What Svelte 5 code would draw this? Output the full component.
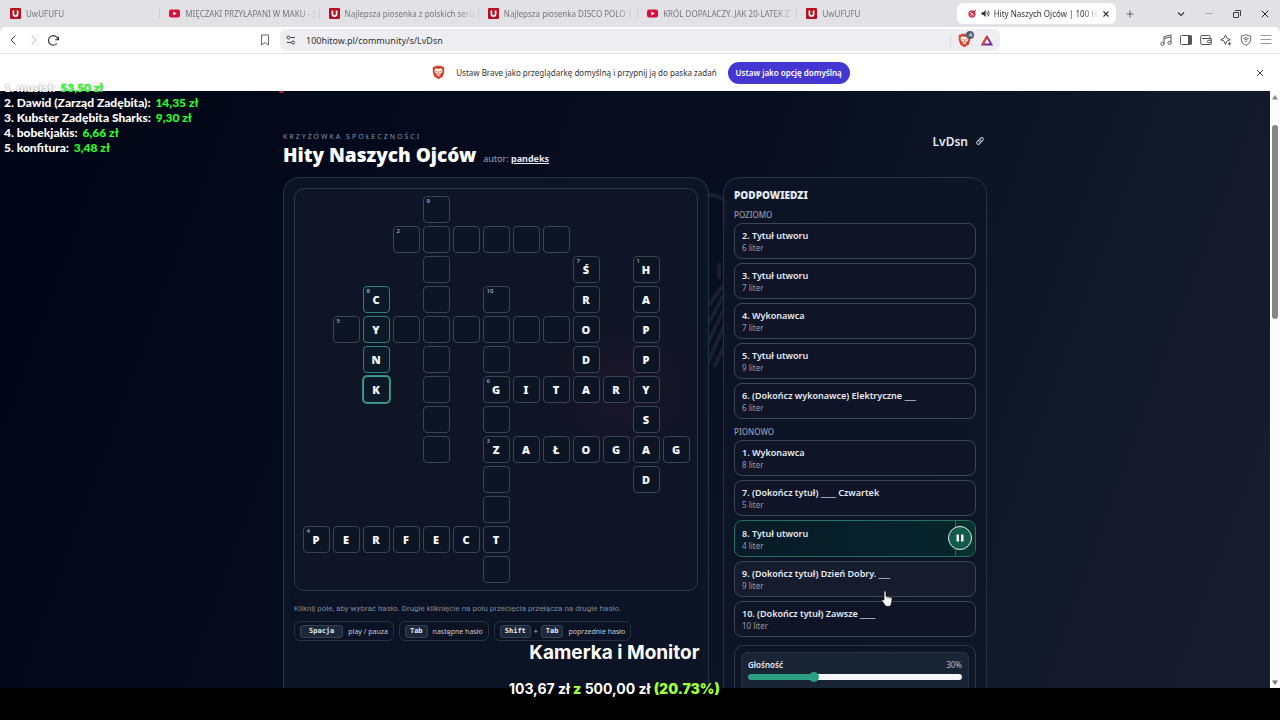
<script>
  const tabs = [
    { icon: 'u', title: 'UwUFUFU' },
    { icon: 'yt', title: 'MIĘCZAKI PRZYŁAPANI W MAKU - S' },
    { icon: 'u', title: 'Najlepsza piosenka z polskich serial' },
    { icon: 'u', title: 'Najlepsza piosenka DISCO POLO | U' },
    { icon: 'yt', title: 'KRÓL DOPALACZY. JAK 20-LATEK Z' },
    { icon: 'u', title: 'UwUFUFU' }
  ];

  const words = [
    { n: 9, r: 0, c: 4, down: true, t: '         ' },
    { n: 2, r: 1, c: 3, t: '      ' },
    { n: 10, r: 3, c: 6, down: true, t: '          ' },
    { n: 5, r: 4, c: 1, t: '         ' },
    { n: 7, r: 2, c: 9, down: true, t: 'ŚRODA' },
    { n: 1, r: 2, c: 11, down: true, t: 'HAPPYSAD' },
    { n: 8, r: 3, c: 2, down: true, t: 'CYNK', active: true },
    { n: 6, r: 6, c: 6, t: 'GITARY' },
    { n: 3, r: 8, c: 6, t: 'ZAŁOGAG' },
    { n: 4, r: 11, c: 0, t: 'PERFECT' }
  ];

  const map = new Map();
  for (const w of words) {
    [...w.t].forEach((ch, i) => {
      const r = w.r + (w.down ? i : 0);
      const c = w.c + (w.down ? 0 : i);
      const key = r * 13 + c;
      const cell = map.get(key) ?? { r, c, ch: '', n: '', active: false, focused: false };
      if (i === 0) cell.n = w.n;
      if (ch !== ' ') cell.ch = ch;
      if (w.active) {
        cell.active = true;
        cell.focused = i === w.t.length - 1;
      }
      map.set(key, cell);
    });
  }
  const cells = [...map.values()].sort((a, b) => a.r - b.r || a.c - b.c);

  const groups = [
    {
      name: 'Poziomo',
      clues: [
        ['2. Tytuł utworu', 6],
        ['3. Tytuł utworu', 7],
        ['4. Wykonawca', 7],
        ['5. Tytuł utworu', 9],
        ['6. (Dokończ wykonawce) Elektryczne ___', 6]
      ]
    },
    {
      name: 'Pionowo',
      clues: [
        ['1. Wykonawca', 8],
        ['7. (Dokończ tytuł) ____ Czwartek', 5],
        ['8. Tytuł utworu', 4, 'active'],
        ['9. (Dokończ tytuł) Dzień Dobry. ___', 9, 'hover'],
        ['10. (Dokończ tytuł) Zawsze ____', 10]
      ]
    }
  ];

  const donors = [
    ['1.', 'musiał:', '53,50 zł'],
    ['2.', 'Dawid (Zarząd Zadębita):', '14,35 zł'],
    ['3.', 'Kubster Zadębita Sharks:', '9,30 zł'],
    ['4.', 'bobekjakis:', '6,66 zł'],
    ['5.', 'konfitura:', '3,48 zł']
  ];

  let volume = $state(30);
</script>

{#snippet favicon(kind)}
  {#if kind === 'yt'}
    <svg class="fav" viewBox="0 0 11 11"><rect y="1.5" width="11" height="8" rx="2" fill="#d8103c" /><path d="M4.4 3.6v3.8L7.6 5.5z" fill="#fff" /></svg>
  {:else}
    <svg class="fav" viewBox="0 0 11 11"><rect width="11" height="11" rx="1" fill="#b90f22" /><path d="M3.4 2.4v3.7a2.1 2.1 0 0 0 4.2 0V2.4" fill="none" stroke="#fff" stroke-width="1.7" /></svg>
  {/if}
{/snippet}

{#snippet lion()}
  <svg viewBox="0 0 14 16" width="13" height="15">
    <path d="M4 .6h6l1.3 1.3 1.3-.1.8 2-.5 1.2.4 1.6-1.6 5.6L7 15.4l-4.7-3.2L.7 6.6l.4-1.6L.6 3.8l.8-2 1.3.1z" fill="#d8412a" />
    <path d="M7 4.2l2.6-.8 1.8 2-.7 2.6-1.9 1 .2 1.5L7 12.3l-2-1.8.2-1.5-1.9-1-.7-2.6 1.8-2z" fill="#fff" />
    <path d="M4 6.2l2 .8M10 6.2l-2 .8M7 7v2.2M5.700 9.500L7 10.300l1.300-.8" stroke="#d8412a" stroke-width=".9" fill="none" />
  </svg>
{/snippet}

<div class="screen">
  <header class="browser">
    <div class="tabbar">
      <div class="tabs">
        {#each tabs as tab}
          <button class="tab">{@render favicon(tab.icon)}<span class="tabtitle">{tab.title}</span></button>
        {/each}
        <div class="tab selected">
          <svg width="9" height="9" viewBox="0 0 9 9"><circle cx="4" cy="5" r="3.700" fill="#d64560" /><path d="M2 3l4 4M6 3L2.500 6.500M5 4l3.500-3.500" stroke="#fbd9df" stroke-width=".8" /><path d="M5 4l3-3" stroke="#7a1e35" /></svg>
          <svg width="9" height="9" viewBox="0 0 9 9"><path d="M.5 3.200h1.800L4.600 1v7L2.300 5.800H.5z" fill="#333" /><path d="M5.800 3q1.200 1.500 0 3M7 1.500q2.400 3 0 6" stroke="#333" fill="none" stroke-width=".9" /></svg>
          <span class="tabtitle">Hity Naszych Ojców | 100 Hi</span>
          <button aria-label="Zamknij kartę"><svg width="6" height="6" viewBox="0 0 6 6"><path d="M.5.5l5 5M5.500.5l-5 5" stroke="#333" stroke-width="1.100" /></svg></button>
        </div>
      </div>
      <div class="winctl">
        <button aria-label="Nowa karta"><svg width="8" height="8" viewBox="0 0 8 8"><path d="M4 .5v7M.5 4h7" stroke="#666" /></svg></button>
        <span class="spacer"></span>
        <button aria-label="Szukaj kart"><svg width="8" height="8" viewBox="0 0 8 8"><path d="M1 2.500l3 3 3-3" stroke="#333" fill="none" stroke-width="1.100" /></svg></button>
        <button aria-label="Minimalizuj"><svg width="8" height="8" viewBox="0 0 8 8"><path d="M.5 3.500h7" stroke="#aaa" /></svg></button>
        <button aria-label="Przywróć"><svg width="8" height="8" viewBox="0 0 8 8"><path d="M.5 2.500h5v5h-5zM2 .5h5.500v5.500" stroke="#444" fill="none" /></svg></button>
        <button aria-label="Zamknij"><svg width="8" height="8" viewBox="0 0 8 8"><path d="M.8.8l6.400 6.400M7.200.8L.8 7.200" stroke="#222" /></svg></button>
      </div>
    </div>

    <div class="toolbar">
      <div class="nav">
        <button aria-label="Wstecz"><svg width="12" height="12" viewBox="0 0 12 12"><path d="M7.500 1.500L3 6l4.500 4.500" stroke="#333" fill="none" /></svg></button>
        <button aria-label="Dalej"><svg width="12" height="12" viewBox="0 0 12 12"><path d="M3.500 1.500L8 6 3.500 10.500" stroke="#bbb" fill="none" /></svg></button>
        <button aria-label="Odśwież"><svg width="12" height="12" viewBox="0 0 12 12"><path d="M10 5.500A4.800 4.800 0 1 0 9 9.500M10.500 2.400v3.400H7.200" stroke="#333" fill="none" stroke-width="1.100" /></svg></button>
      </div>
      <button class="bookmark" aria-label="Zakładka"><svg width="10" height="12" viewBox="0 0 10 12"><path d="M1.500 1h7v10L5 8.500 1.500 11z" stroke="#666" fill="none" /></svg></button>
      <div class="address">
        <svg width="10" height="10" viewBox="0 0 10 10"><path d="M4.500 2.500H9M1 7.500h4" stroke="#444" /><circle cx="2.500" cy="2.500" r="1.500" stroke="#444" fill="none" /><circle cx="7" cy="7.500" r="1.500" stroke="#444" fill="none" /></svg>
        <input aria-label="Adres" value="100hitow.pl/community/s/LvDsn" />
        <span class="shield">{@render lion()}<span class="count">4</span></span>
        <svg width="12" height="11" viewBox="0 0 12 11"><path d="M6 1.800L1.500 9.500h9z" fill="none" stroke="#7b2a92" stroke-width="1.800" /><path d="M6 1.500L1.300 9.600" stroke="#e0402c" stroke-width="2" /></svg>
      </div>
      <div class="tools">
        <svg width="12" height="12" viewBox="0 0 12 12"><path d="M4 9.500V2.500l7-1.500v7.500M4 4.500l7-1.500" stroke="#555" fill="none" /><circle cx="2.500" cy="9.800" r="1.600" fill="none" stroke="#555" /><circle cx="9.500" cy="8.800" r="1.600" fill="none" stroke="#555" /></svg>
        <svg width="12" height="12" viewBox="0 0 12 12"><rect x=".5" y="1.500" width="11" height="9" rx="1" fill="none" stroke="#555" /><path d="M8 1.500h3.500v9H8z" fill="#555" /></svg>
        <svg width="12" height="12" viewBox="0 0 12 12"><path d="M10 4V2.500a1 1 0 0 0-1-1H2a1.300 1.300 0 0 0-1.300 1.300V9A1.500 1.500 0 0 0 2 10.500h8.500a.8.800 0 0 0 .8-.8V4.500H2M11.300 6.300H8.500a1.200 1.200 0 0 0 0 2.400h2.800" stroke="#555" fill="none" /></svg>
        <svg width="12" height="12" viewBox="0 0 12 12"><path d="M5.500 1L7 4.300l3.300 1.400L7 7 5.500 10.500 4 7 .7 5.700 4 4.300z" stroke="#555" fill="none" /><path d="M9.500 8v3.500M7.800 9.800h3.500" stroke="#555" /></svg>
        <svg width="12" height="12" viewBox="0 0 12 12"><path d="M6 .7q2 1.200 4.700 1.300v4Q10.300 9.500 6 11.400 1.700 9.500 1.300 6V2Q4 1.900 6 .7z" stroke="#666" fill="none" /><path d="M3.300 4.500q2.700-1.800 5.400 0M4.300 6q1.700-1.100 3.400 0M5.300 7.500h1.400" stroke="#666" fill="none" /></svg>
        <svg width="12" height="12" viewBox="0 0 12 12"><path d="M.5 1.500h11M.5 5.500h11M.5 9.500h11" stroke="#999" /></svg>
      </div>
    </div>

    <div class="infobar">
      <div class="prompt">
        {@render lion()}
        <span>Ustaw Brave jako przeglądarkę domyślną i przypnij ją do paska zadań</span>
        <button class="primary">Ustaw jako opcję domyślną</button>
      </div>
      <button class="dismiss" aria-label="Zamknij komunikat"><svg width="8" height="8" viewBox="0 0 8 8"><path d="M1 1l6 6M7 1L1 7" stroke="#444" /></svg></button>
    </div>
  </header>

  <div class="viewport">
    <main>
      <svg class="art" viewBox="0 0 240 300" aria-hidden="true">
        <g fill="none" stroke="#7f8fa3" stroke-opacity=".13" stroke-width="4">
          <path d="M218 14q9 0 17 5v30M229 82v16M219 124l16-22M218 143l17-31M218 162l17-36M218 181l17-38M224 186l11-22" />
        </g>
      </svg>
      <div class="content">
        <div class="heading">
          <div>
            <p class="eyebrow">Krzyżówka społeczności</p>
            <div class="titleline"><h1>Hity Naszych Ojców</h1><span>autor: <a href="#pandeks">pandeks</a></span></div>
          </div>
          <div class="code">LvDsn
            <svg width="10" height="10" viewBox="0 0 10 10"><g transform="rotate(-45 5 5)" fill="none" stroke="#c4cad6"><rect x="1" y="3.400" width="8" height="3.200" rx="1.600" /><path d="M3.400 5h3.200" /></g></svg>
          </div>
        </div>

        <div class="columns">
          <section class="panel game">
            <div class="board">
              {#each cells as cell}
                <button class="cell" class:active={cell.active} class:focused={cell.focused} style="grid-row:{cell.r + 1};grid-column:{cell.c + 1}" aria-label="Pole {cell.r + 1}, {cell.c + 1}">
                  {#if cell.n}<small>{cell.n}</small>{/if}{cell.ch}
                </button>
              {/each}
            </div>
            <p class="help">Kliknij pole, aby wybrać hasło. Drugie kliknięcie na polu przecięcia przełącza na drugie hasło.</p>
            <div class="keys">
              <span class="chip"><kbd class="wide">Spacja</kbd>play / pauza</span>
              <span class="chip"><kbd>Tab</kbd>następne hasło</span>
              <span class="chip"><kbd>Shift</kbd><i>+</i><kbd>Tab</kbd>poprzednie hasło</span>
            </div>
          </section>

          <aside class="panel hints">
            <h2>Podpowiedzi</h2>
            {#each groups as group}
              <section class="group">
                <h3>{group.name}</h3>
                {#each group.clues as [text, len, state]}
                  <div class="clue {state ?? ''}">
                    <button class="cluetext"><strong>{text}</strong><span>{len} liter</span></button>
                    {#if state === 'active'}
                      <div class="edge"><button class="pause" aria-label="Pauza"><svg width="8" height="8" viewBox="0 0 8 8"><path d="M.5.5h2.500v7H.5zM5 .5h2.500v7H5z" fill="#fff" /></svg></button></div>
                    {/if}
                  </div>
                {/each}
              </section>
            {/each}
            <div class="player">
              <div class="volume">
                <div class="row"><label for="vol">Głośność</label><output for="vol">{volume}%</output></div>
                <input id="vol" type="range" min="0" max="100" bind:value={volume} style="--v:{volume}%" />
              </div>
            </div>
          </aside>
        </div>
      </div>
    </main>
    <div class="scrollbar" aria-hidden="true">
      <svg width="6" height="5" viewBox="0 0 6 5"><path d="M3 0l3 4.500H0z" fill="#888" /></svg>
      <span class="track"><span class="thumb"></span></span>
      <svg width="6" height="5" viewBox="0 0 6 5"><path d="M3 5L0 .5h6z" fill="#777" /></svg>
    </div>
  </div>
  <footer></footer>

  <ol class="donors">
    {#each donors as [n, name, sum]}
      <li>{n} {name} <b>{sum}</b></li>
    {/each}
  </ol>
  <div class="goal">
    <p class="goaltitle">Kamerka i Monitor</p>
    <p class="goalsum">103,67 zł <b>z</b> 500,00 zł <b>(20.73%)</b></p>
  </div>
  <span class="reddot"></span>
  <svg class="cursor" width="12" height="17" viewBox="0 0 12 17"><path d="M3 1.500q1.200-1.200 2 0V6.300l5.200 1.200q1 .4.900 1.500l-.7 4.500-1.200 2.800H4.800L.8 10.500q.2-1.500 2.200-.4z" fill="#fff" stroke="#111" stroke-width=".7" /><path d="M6.800 7v2M8.800 7.500v2" stroke="#555" stroke-width=".5" /></svg>
</div>

<style>
  :global(body) { margin: 0; background: #000; }
  .screen {
    position: relative;
    display: flex;
    flex-direction: column;
    height: 100vh;
    overflow: hidden;
    font-family: "Noto Sans", sans-serif;
    color: #e5eaf3;
  }
  p, h1, h2, h3, ol { margin: 0; padding: 0; }
  button { font: inherit; color: inherit; border: 0; padding: 0; background: none; }
  svg { flex: none; display: block; }

  .browser { background: #fff; color: #333; font-size: 8px; }
  .tabbar { display: flex; height: 27px; background: #e2e2e6; }
  .tabs { display: flex; flex: 1; min-width: 0; }
  .tab {
    display: flex;
    flex: 1 1 24px;
    align-items: center;
    gap: 5px;
    box-sizing: border-box;
    min-width: 0;
    padding: 0 1px 0 10px;
    text-align: left;
    color: #76767b;
  }
  .tab + .tab:not(.selected) { background: linear-gradient(#cfcfd4, #cfcfd4) left center / 1px 11px no-repeat; }
  .fav { width: 11px; height: 11px; }
  .tabtitle {
    flex: 1;
    overflow: hidden;
    white-space: nowrap;
    mask-image: linear-gradient(90deg, #000 85%, transparent);
  }
  .selected { margin: 3px 1px; gap: 4px; background: #fff; border-radius: 6px; color: #333; padding: 0 7px 0 11px; }
  .winctl { display: flex; align-items: center; gap: 20px; width: 143px; padding: 0 11px 0 9px; }
  .spacer { flex: 1; }

  .toolbar {
    display: flex;
    align-items: center;
    height: 26px;
    padding: 0 8px;
    background: #fff;
    border-bottom: 1px solid #e0e0e4;
    border-radius: 6px 6px 0 0;
    box-shadow: 0 -4px #e2e2e6;
  }
  .nav, .tools { display: flex; align-items: center; gap: 8px; flex: 1; }
  .tools { justify-content: flex-end; }
  .bookmark { margin-right: 10px; }
  .nav { max-width: 252px; }
  .address {
    display: flex;
    align-items: center;
    gap: 10px;
    box-sizing: border-box;
    width: 57%;
    height: 22px;
    padding: 0 7px 0 6px;
    border-radius: 6px;
    background: #eeeef2;
  }
  .address input { flex: 1; min-width: 0; border: 0; padding: 0; background: none; color: #333; font: 9px "Noto Sans", sans-serif; }
  .shield { position: relative; padding-left: 7px; border-left: 1px solid #ddd; }
  .count {
    position: absolute;
    top: -2px;
    right: -3px;
    width: 8px;
    border-radius: 4px;
    background: #555b66;
    color: #fff;
    font-size: 6px;
    line-height: 8px;
    text-align: center;
  }

  .infobar { display: flex; align-items: center; height: 37px; padding: 0 16px 0 0; }
  .prompt { display: flex; flex: 1; align-items: center; justify-content: center; gap: 11px; padding-left: 26px; }
  .primary { height: 22px; padding: 0 8px; border-radius: 11px; background: #4436d3; color: #fff; font-weight: 600; }

  .viewport { display: flex; flex: 1; min-height: 0; }
  main {
    position: relative;
    flex: 1;
    overflow: hidden;
    background:
      linear-gradient(110deg, #020617 0%, #040a1b 25%, #080e20 52%, #0f1727 74%, #161b2d 94%);
  }
  .art { position: absolute; top: 90px; left: 490px; width: 240px; height: 300px; }
  .content { position: relative; width: 704px; max-width: 100%; margin: 0 auto; padding-top: 40px; }
  .heading { display: flex; justify-content: space-between; margin-bottom: 9px; }
  .eyebrow { font-size: 7px; line-height: 12px; letter-spacing: 2px; text-transform: uppercase; color: #8b95a8; }
  .titleline { display: flex; align-items: baseline; gap: 7px; font-size: 9px; color: #9ca6b8; }
  h1 { font-size: 19px; line-height: 25px; font-weight: 900; color: #fff; }
  .titleline a { color: #e5eaf3; font-weight: 700; }
  .code { display: flex; align-items: center; gap: 7px; height: 20px; padding-right: 2px; font-size: 12px; font-weight: 600; }

  .columns { display: grid; grid-template-columns: 1fr 264px; gap: 14px; }
  .panel {
    box-sizing: border-box;
    min-height: 560px;
    padding: 10px;
    border: 1px solid #1f3543;
    border-radius: 16px;
    background: rgba(13, 21, 38, .82);
  }
  .game { box-shadow: inset 0 0 14px rgba(20, 60, 75, .2); }
  .board {
    display: grid;
    grid-template: repeat(13, 27px) / repeat(13, 27px);
    gap: 3px;
    justify-content: center;
    padding: 7px;
    border: 1px solid #28374a;
    border-radius: 10px;
    background: radial-gradient(circle at 82% 50%, rgba(70, 20, 45, .2), transparent 25%), #0f1526;
  }
  .cell {
    position: relative;
    border: 1px solid #384355;
    border-radius: 4px;
    background: #0d1424;
    font-size: 11px;
    line-height: 25px;
    font-weight: 900;
    color: #f5f8fc;
  }
  .cell small { position: absolute; top: 1px; left: 3px; font-size: 6px; line-height: 7px; font-weight: 500; color: #b4bdcb; }
  .cell.active { border-color: #2c8273; background: #0c1a28; }
  .cell.focused { border-color: #42a18d; box-shadow: 0 0 0 1px #358b7a; }
  .help { margin: 12px 0 7px; font-family: Roboto, sans-serif; font-size: 8px; line-height: 11px; color: #7d889b; white-space: nowrap; }
  .keys { display: flex; gap: 5px; }
  .chip {
    display: flex;
    align-items: center;
    gap: 5px;
    height: 18px;
    padding: 0 5px;
    border: 1px solid #253244;
    border-radius: 6px;
    font-size: 7px;
    color: #c3cbd8;
    white-space: nowrap;
  }
  kbd {
    padding: 0 4px;
    border: 1px solid #334255;
    border-radius: 3px;
    background: #1b2839;
    font: 700 7px/11px "DejaVu Sans Mono", monospace;
    color: #e5eaf3;
  }
  kbd.wide { padding: 0 8px; }
  i { font-style: normal; margin: 0 -2px; }

  h2 { font-size: 10px; line-height: 14px; font-weight: 900; text-transform: uppercase; }
  h3 { font-size: 8px; line-height: 12px; font-weight: 500; text-transform: uppercase; color: #939db0; margin-bottom: -2px; }
  .group { display: flex; flex-direction: column; gap: 4px; margin-top: 7px; }
  .clue {
    display: flex;
    height: 34px;
    border: 1px solid #3a4557;
    border-radius: 8px;
    background: #0f1526;
    overflow: hidden;
  }
  .cluetext { display: flex; flex: 1; flex-direction: column; justify-content: center; padding: 0 7px; text-align: left; }
  .cluetext strong { font-size: 9px; line-height: 13px; font-weight: 600; }
  .cluetext span { font-size: 8px; line-height: 11px; color: #929cae; }
  .clue.active { height: 35px; border-color: #247263; background: linear-gradient(90deg, #081a27, #06252b); }
  .clue.hover { background: #161c2e; }
  .edge { position: relative; width: 19px; border-left: 1px solid #247263; background: #07302f; }
  .pause {
    position: absolute;
    top: 5px;
    left: -8px;
    display: grid;
    place-items: center;
    width: 24px;
    height: 24px;
    border: 1px solid #e6f0ee;
    border-radius: 50%;
    background: #0f5a48;
  }
  .player { margin-top: 8px; height: 80px; padding: 6px; border: 1px solid #28374a; border-radius: 9px; }
  .volume { height: 70px; padding: 5px 6px; border: 1px solid #243143; border-radius: 6px; background: #192435; }
  .row { display: flex; justify-content: space-between; font-size: 8px; line-height: 13px; color: #b5becc; }
  .row label { font-weight: 600; color: #e5eaf3; }
  #vol {
    display: block;
    appearance: none;
    width: 100%;
    height: 6px;
    margin: 3px 0;
    border-radius: 3px;
    background: linear-gradient(90deg, #2aa080 var(--v), #f3f5f6 var(--v));
  }
  #vol::-webkit-slider-thumb { appearance: none; width: 10px; height: 10px; border-radius: 50%; background: #2aa080; }

  .scrollbar {
    display: flex;
    flex-direction: column;
    align-items: center;
    width: 10px;
    padding: 4px 0 3px;
    box-sizing: border-box;
    background: #fcfcfc;
  }
  .track { flex: 1; padding-top: 25px; }
  .thumb { display: block; width: 6px; height: 35%; border-radius: 3px; background: #858585; }
  footer { height: 32px; background: #000; }

  .donors {
    position: absolute;
    top: 80px;
    left: 4px;
    list-style: none;
    font: 900 12px/15px Lato, sans-serif;
    color: #fff;
    text-shadow: 0 0 2px rgba(0, 0, 0, .5);
    white-space: nowrap;
  }
  .donors b { margin-left: 2px; color: #2bff2b; }
  .goal {
    position: absolute;
    bottom: 22px;
    left: 48%;
    transform: translateX(-50%);
    font-family: Inter, sans-serif;
    font-weight: 700;
    color: #fff;
    text-align: center;
    white-space: nowrap;
  }
  .goaltitle { font-size: 19px; line-height: 26px; }
  .goalsum { margin-top: 14px; font-size: 14px; line-height: 18px; }
  .goal b { color: #9dff3c; }
  .reddot { position: absolute; top: 91px; left: 279px; width: 5px; height: 2px; border-radius: 0 0 3px 3px; background: #b3263a; }
  .cursor { position: absolute; top: 590px; left: 881px; }
</style>
